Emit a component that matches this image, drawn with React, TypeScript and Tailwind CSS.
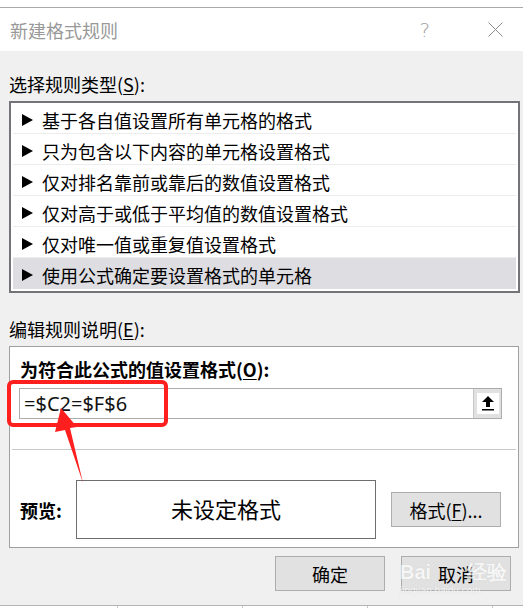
import React from "react";

const ruleTypes = [
  "基于各自值设置所有单元格的格式",
  "只为包含以下内容的单元格设置格式",
  "仅对排名靠前或靠后的数值设置格式",
  "仅对高于或低于平均值的数值设置格式",
  "仅对唯一值或重复值设置格式",
  "使用公式确定要设置格式的单元格",
];

const font = "font-['Noto_Sans_CJK_SC','Noto_Sans',sans-serif]";

function Triangle() {
  return (
    <svg width="11" height="12" viewBox="0 0 11 12" className="shrink-0">
      <polygon points="0,0 11,6 0,12" fill="#000" />
    </svg>
  );
}

function DlgButton({ children, w = "w-[110px]" }: { children: React.ReactNode; w?: string }) {
  return (
    <div
      className={`${w} h-[35px] flex items-center justify-center bg-[#e1e1e1] border border-[#adadad] text-[18px] leading-none text-black`}
    >
      {children}
    </div>
  );
}

export default function App() {
  return (
    <div className={`relative w-[523px] h-[610px] overflow-hidden bg-white ${font}`}>
      {/* strip above the dialog */}
      <div className="h-[8px] bg-white border-b border-[#a9a9a9]" />

      {/* title bar */}
      <div className="h-[43px] bg-white flex items-center pl-[10px] pr-[20px]">
        <span className="text-[18px] leading-none text-[#999999]">新建格式规则</span>
        <span className="ml-auto mr-[58px] text-[20px] leading-none text-[#a0a0a0] font-['DejaVu_Sans',sans-serif] font-light">?</span>
        <svg width="15" height="15" viewBox="0 0 15 15">
          <path d="M0.5 0.5 L14.5 14.5 M14.5 0.5 L0.5 14.5" stroke="#8c8c8c" strokeWidth="1" fill="none" />
        </svg>
      </div>

      {/* dialog body */}
      <div className="bg-[#f0f0f0] h-[554px] pl-[9px] pr-[3px] pt-[21px] flex flex-col">
        <div className="h-[24px] text-[18px] leading-[24px] text-black">
          选择规则类型(<span className="underline underline-offset-2">S</span>):
        </div>

        {/* rule type list */}
        <div className="mt-[5px] w-[511px] h-[192px] border-2 border-[#737478] bg-white p-[2px] pt-0">
          {ruleTypes.map((t, i) => (
            <div
              key={i}
              className={`h-[31px] flex items-center pl-[9px] pt-[4px] gap-[9px] border-b ${
                i === 5 ? "bg-[#dedde2] border-transparent" : "border-[#ececec]"
              }`}
            >
              <Triangle />
              <span className="text-[18px] leading-none text-black">{t}</span>
            </div>
          ))}
        </div>

        <div className="mt-[24px] h-[24px] text-[18px] leading-[24px] text-black">
          编辑规则说明(<span className="underline underline-offset-2">E</span>):
        </div>

        {/* rule description box */}
        <div className="mt-[5px] w-[510px] h-[202px] border border-[#a0a0a0] bg-white flex flex-col">
          <div className="mt-[10px] pl-[10px] h-[24px] text-[18px] leading-[24px] font-bold text-black">
            为符合此公式的值设置格式(<span className="underline underline-offset-2">O</span>):
          </div>
          <div className="mt-[7px] ml-[9px] w-[483px] h-[31px] border border-[#acacac] flex items-center">
            <span className="pl-[4px] text-[20px] leading-none text-[#111] font-['Noto_Sans',sans-serif]">
              =$C2=$F$6
            </span>
            <div className="ml-auto h-full w-[28px] bg-[#e1e1e1] border-l border-[#c8c8c8] flex items-center justify-center">
              <div className="w-[22px] h-[21px] bg-white flex items-center justify-center">
                <svg width="12" height="15" viewBox="0 0 12 15">
                  <polygon points="6,0 12,6 8,6 8,11 4,11 4,6 0,6" fill="#000" />
                  <rect x="0" y="13" width="12" height="1.5" fill="#000" />
                </svg>
              </div>
            </div>
          </div>

          <div className="mt-[30px] mx-[2px] border-t border-[#c8c8c8]" />

          <div className="mt-[30px] flex items-center pl-[10px]">
            <span className="w-[56px] text-[18px] leading-none font-bold text-black">预览:</span>
            <div className="w-[300px] h-[59px] pb-[3px] border border-[#6e6e6e] flex items-center justify-center text-[22px] leading-none text-black">
              未设定格式
            </div>
            <div className="ml-[15px]">
              <DlgButton>
                格式(<span className="underline underline-offset-2">F</span>)...
              </DlgButton>
            </div>
          </div>
        </div>

        {/* OK / Cancel */}
        <div className="mt-[8px] flex justify-end gap-[16px] pr-[9px]">
          <DlgButton>确定</DlgButton>
          <DlgButton>取消</DlgButton>
        </div>
      </div>

      {/* sheet strip below the dialog */}
      <div className="h-[3px] border-t border-[#b4b4b4] flex bg-white">
        <div className="w-[117px]" />
        <div className="w-[125px] border-l border-[#c8c8c8]" />
        <div className="w-[125px] border-l border-[#c8c8c8]" />
        <div className="w-[125px] border-l border-[#c8c8c8]" />
        <div className="w-[31px] border-l border-[#c8c8c8]" />
      </div>

      {/* watermark */}
      <div className="absolute left-[400px] top-[562px] flex flex-col items-start pointer-events-none opacity-70">
        <span className="text-[20px] leading-none font-bold text-white [text-shadow:0_0_1px_#bbb] font-['Liberation_Sans',sans-serif]">
          Bai<span className="mx-[18px]" />经验
        </span>
        <span className="mt-[4px] text-[10px] leading-none text-white [text-shadow:0_0_1px_#bbb] font-['Liberation_Sans',sans-serif]">
          jingyan.baidu.com
        </span>
      </div>

      {/* red annotation */}
      <svg className="absolute left-0 top-0 pointer-events-none" width="523" height="610" viewBox="0 0 523 610">
        <rect x="9" y="382" width="157" height="43" rx="4" ry="4" fill="none" stroke="#ff1f1f" strokeWidth="4" />
        <polygon points="61,408 77,427 70,428 83,483 65,430 55,432" fill="#ff1f1f" />
      </svg>
    </div>
  );
}
